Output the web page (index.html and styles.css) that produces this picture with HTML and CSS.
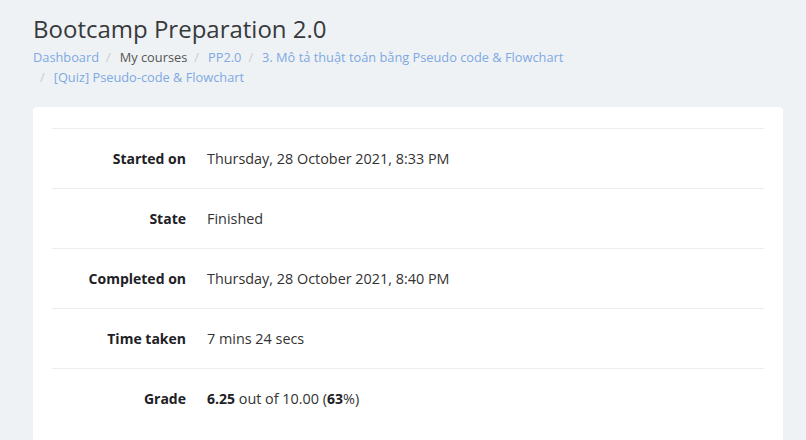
FILE: index.html
```html
<!DOCTYPE html>
<html lang="en">
<head>
<meta charset="utf-8">
<link rel="stylesheet" href="styles.css">
</head>
<body>
<div class="page">
  <header class="page-header">
    <h1 class="title">Bootcamp Preparation 2.0</h1>
    <nav class="crumbs">
      <a class="crumb link">Dashboard</a>
      <span class="crumb plain">My courses</span>
      <a class="crumb link">PP2.0</a>
      <a class="crumb link">3. Mô tả thuật toán bằng Pseudo code &amp; Flowchart</a>
      <a class="crumb link">[Quiz] Pseudo-code &amp; Flowchart</a>
    </nav>
  </header>
  <main class="card">
    <table class="summary">
      <tr><th>Started on</th><td>Thursday, 28 October 2021, 8:33 PM</td></tr>
      <tr><th>State</th><td>Finished</td></tr>
      <tr><th>Completed on</th><td>Thursday, 28 October 2021, 8:40 PM</td></tr>
      <tr><th>Time taken</th><td>7 mins 24 secs</td></tr>
      <tr><th>Grade</th><td><b>6.25</b> out of 10.00 (<b>63</b>%)</td></tr>
    </table>
  </main>
</div>
</body>
</html>
```
FILE: styles.css
```css
html, body { margin: 0; padding: 0; }
body {
  background: #eff2f4;
  font-family: "Open Sans", "Noto Sans", sans-serif;
  color: #333;
  width: 806px;
  height: 440px;
  overflow: hidden;
}
.page { padding: 0 23px 0 33px; }
.page-header { padding-top: 14px; }
.title {
  margin: 0;
  font-size: 24px;
  font-weight: 400;
  line-height: 30px;
  color: #373a3c;
}
.crumbs {
  margin-top: 3px;
  font-size: 12.8px;
  line-height: 20px;
  display: flex;
  flex-wrap: wrap;
  max-width: 620px;
}
.crumb + .crumb { padding-left: 7px; }
.crumb + .crumb::before {
  content: "/";
  color: #c8ccd0;
  padding-right: 9px;
}
.link { color: #7ea9e4; text-decoration: none; }
.plain { color: #555; }
.card {
  margin-top: 20px;
  background: #fff;
  border-radius: 4px;
  padding: 21px 19px 20px;
}
.summary {
  width: 100%;
  border-collapse: collapse;
  font-size: 14px;
}
.summary tr { border-top: 1px solid #eceeef; }
.summary th {
  width: 134px;
  text-align: right;
  font-weight: 700;
  color: #1d2125;
  padding: 0 21px 0 0;
  height: 59px;
}
.summary td { padding: 0; color: #333; font-size: 14.4px; }
.summary b { font-weight: 700; color: #1d2125; font-size: 14px; }
```
